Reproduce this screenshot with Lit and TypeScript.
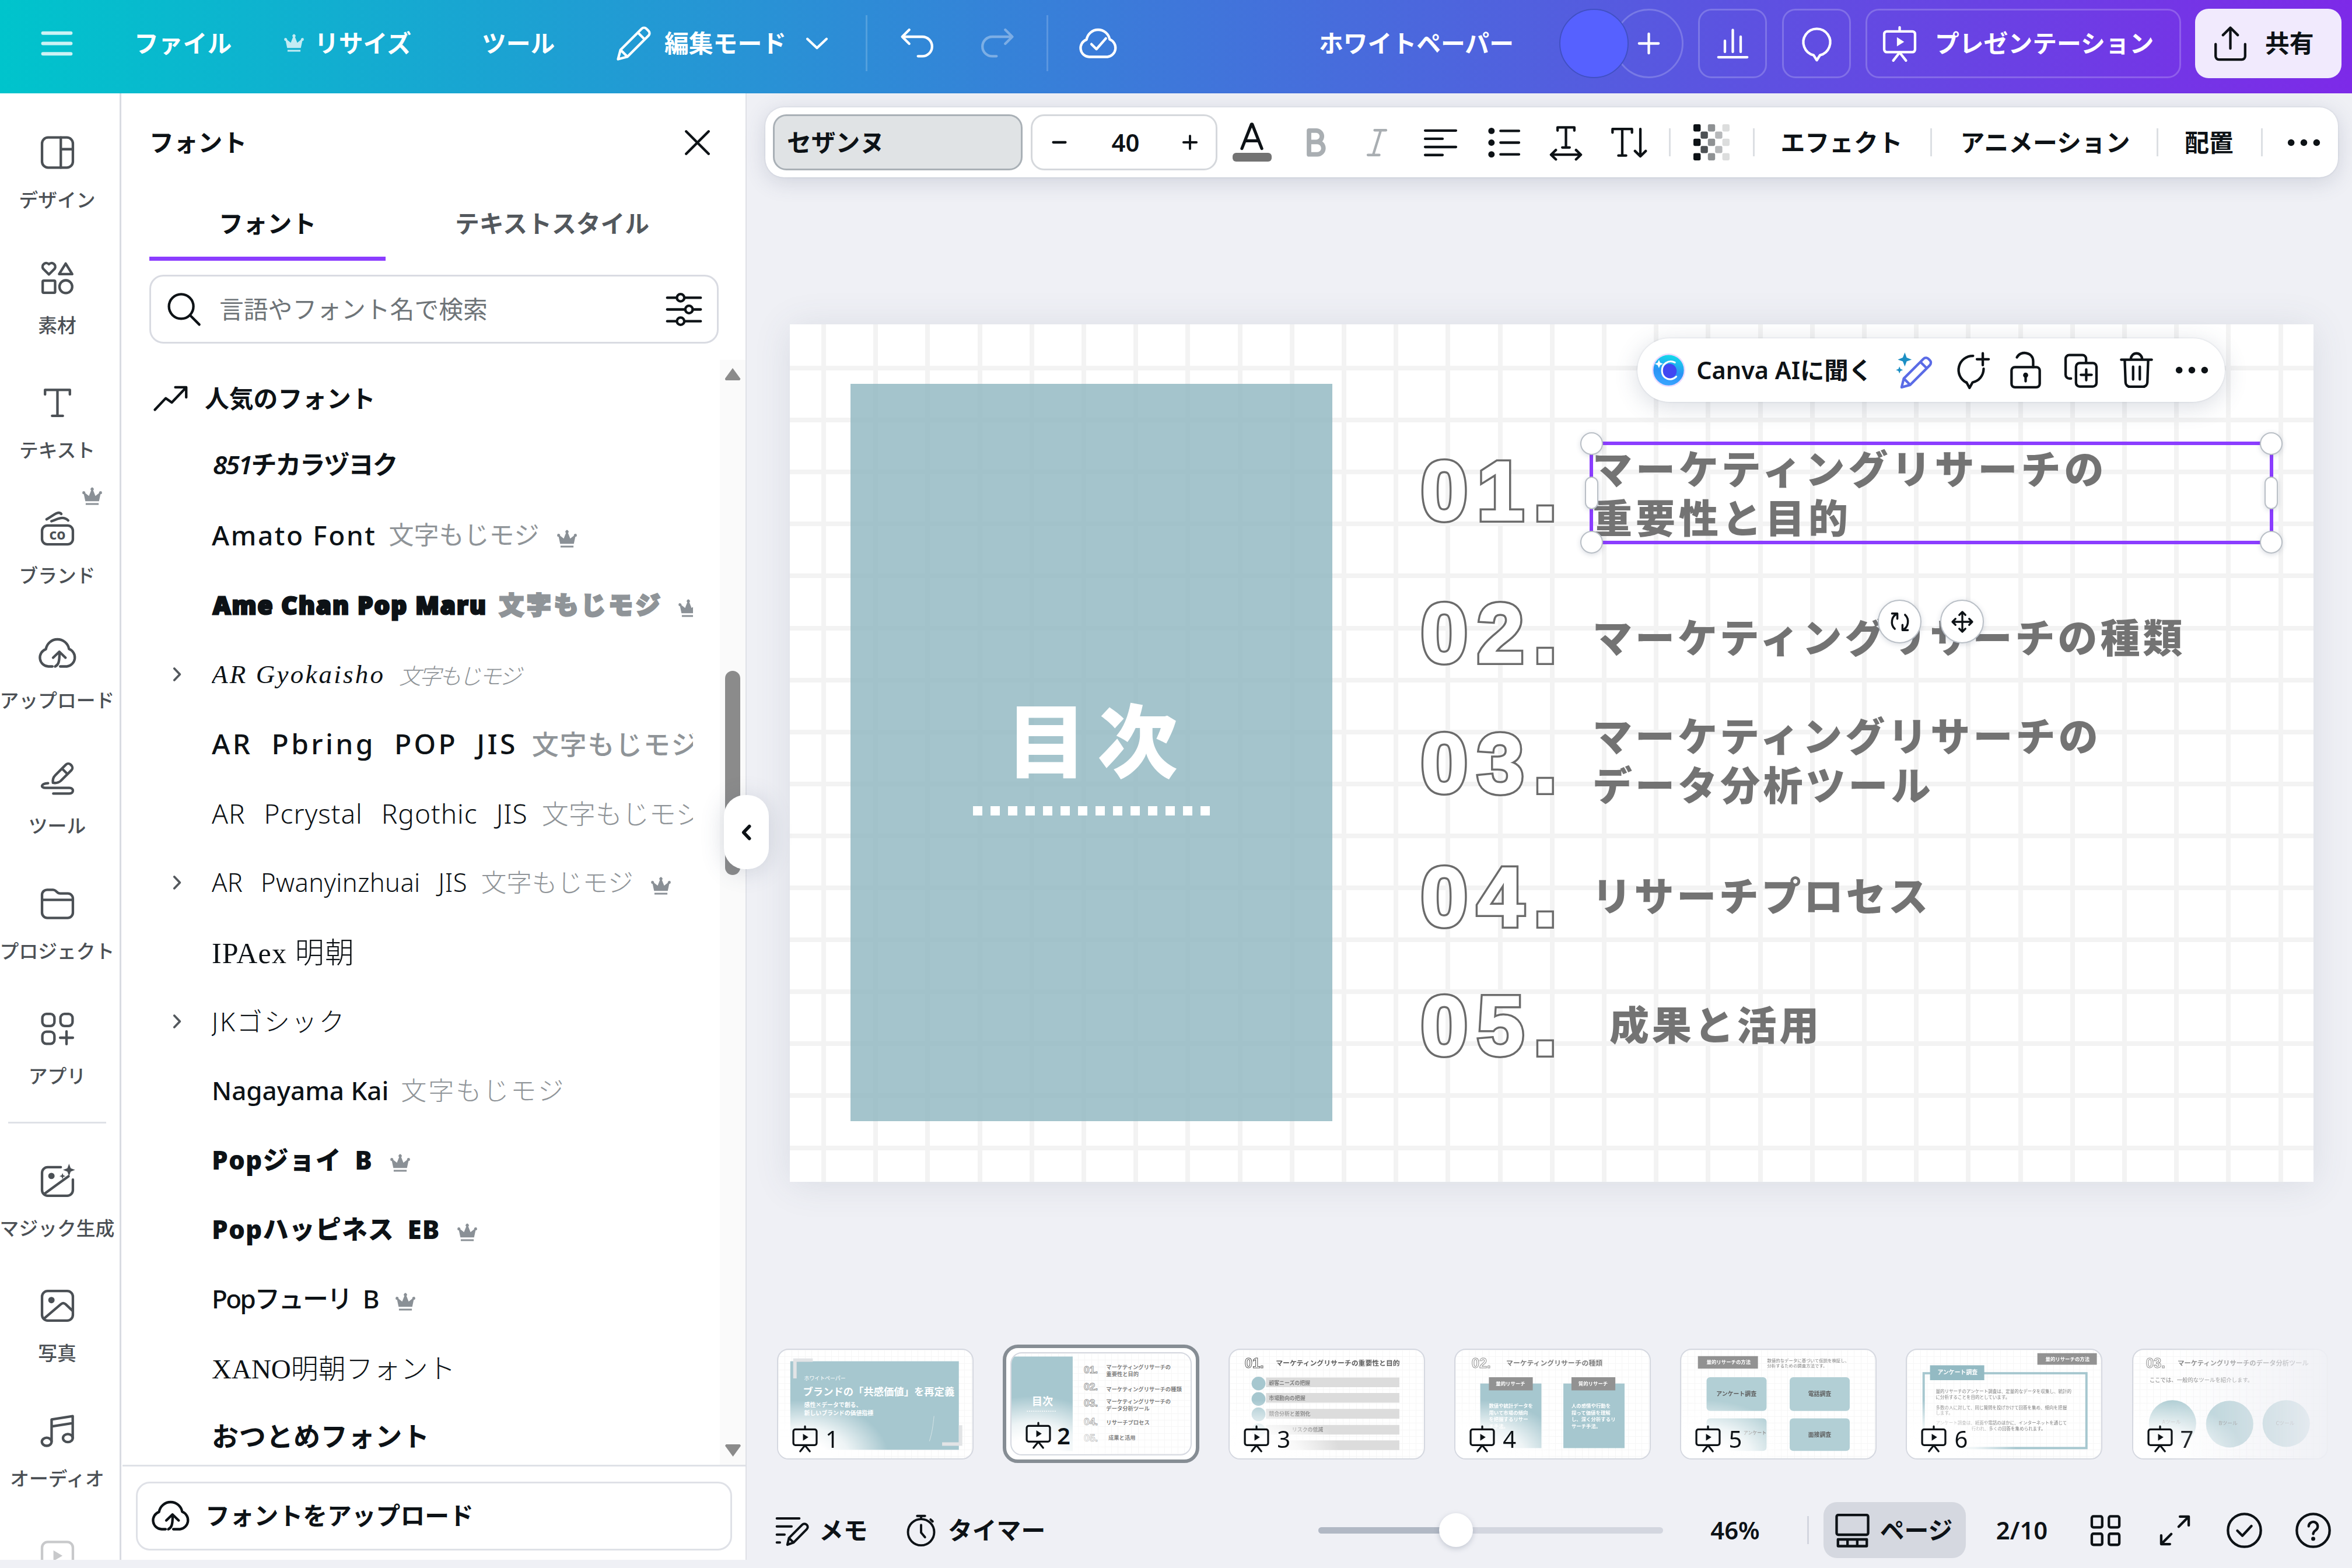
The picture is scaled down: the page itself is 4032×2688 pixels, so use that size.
import { LitElement, css, html, svg } from "lit";
import type { SVGTemplateResult } from "lit";
import { customElement, property } from "lit/decorators.js";
import { classMap } from "lit/directives/class-map.js";
import { styleMap } from "lit/directives/style-map.js";

const cloud = "a5.3 5.3 0 0 1-1.5-10.3A7 7 0 0 1 18.9 9.6 5.4 5.4 0 0 1 17.6 20";

// 24 x 24 grid, stroked with currentColor
const ICONS: Record<string, SVGTemplateResult> = {
  menu: svg`<path stroke-width="2.1" d="M3.7 5.8h16.6M3.7 12h16.600M3.700 18.200h16.600"/>`,
  crown: svg`<path class="fill" d="M4.6 17.2 3 9.6a1.6 1.6 0 1 1 1.5-1.2l4 3.2 2.4-6.2a1.7 1.7 0 1 1 2.2 0l2.4 6.2 4-3.2A1.6 1.6 0 1 1 21 9.6l-1.6 7.6zM5 19.2h14v1.9H5z"/>`,
  pencil: svg`<path d="m2.6 21.4 1.5-5.6L16.7 3.2a2 2 0 0 1 2.8 0l1.3 1.3a2 2 0 0 1 0 2.8L8.2 19.9zM14.4 5.5l4.1 4.1M4.1 15.8l4.1 4.1"/>`,
  down: svg`<path d="m6.3 9.3 5.7 5.4 5.7-5.4"/>`,
  left: svg`<path d="m14 7.5-4.3 4.5 4.3 4.5"/>`,
  right: svg`<path stroke-width="2" d="m9.8 6.8 5 5.2-5 5.2"/>`,
  undo: svg`<path d="M7.2 3.8 3 8l4.2 4.2M3.3 8H15a5.8 5.8 0 0 1 0 11.6h-2.6"/>`,
  redo: svg`<path d="M16.8 3.8 21 8l-4.2 4.2M20.7 8H9a5.8 5.8 0 0 0 0 11.6h2.6"/>`,
  cloudCheck: svg`<path d="M6.6 20${cloud}z"/><path d="m8 12.4 3 3L16.6 9"/>`,
  cloudUp: svg`<path d="M9 20H6.6${cloud}h-4"/><path d="M10.6 20c2-.9 2.6-2.6 2.6-8.2M9.4 14.8l3.7-3.6 3.7 3.6"/>`,
  plus: svg`<path d="M12 6.2v11.6M6.2 12h11.6"/>`,
  minus: svg`<path d="M7.2 12h9.6"/>`,
  chart: svg`<path d="M3.4 20.2h17.2M7.3 17v-6.6M12 17V4M16.7 17V8"/>`,
  comment: svg`<path d="M10.1 19a8 8 0 1 1 3.8 0L12 22z"/>`,
  present: svg`<rect x="2.8" y="4.8" width="18.4" height="12.4" rx="1.6"/><path d="M12 4.8V2.4M12 17.4l-3.8 4.8M12 17.4l3.8 4.8"/><path class="fill" d="m10.4 8.3 4.3 2.7-4.3 2.7z"/>`,
  share: svg`<path d="M12 15V3M7.6 7 12 2.6 16.4 7M3.2 12.4v7.2a2 2 0 0 0 2 2h13.6a2 2 0 0 0 2-2v-7.2"/>`,
  close: svg`<path d="m5.3 5.3 13.4 13.4M18.7 5.3 5.3 18.7"/>`,
  search: svg`<circle cx="10.3" cy="10.2" r="7.3"/><path d="m15.6 15.5 5.5 5.5"/>`,
  sliders: svg`<path d="M2 5h5.7M12.3 5H22M2 12h10.7M17.3 12H22M2 19h5.7M12.3 19H22"/><circle cx="10" cy="5" r="2.2"/><circle cx="15" cy="12" r="2.2"/><circle cx="10" cy="19" r="2.2"/>`,
  trend: svg`<path d="m2.6 18.6 6.5-6.9 3.6 2.6L21 5.6M14.8 5.2h6.5v6"/>`,
  design: svg`<rect x="2.8" y="3" width="18.4" height="18" rx="3.6"/><path d="M14 3v18M14 10h7.2"/>`,
  elements: svg`<path d="M6.9 9.9 3.4 6.4a2.2 2.2 0 0 1 3.5-2.6 2.2 2.2 0 0 1 3.5 2.6zM16.9 3.4l3.9 6.3H13z"/><rect x="3.2" y="13.6" width="7.4" height="7.2" rx=".6"/><circle cx="17" cy="17.2" r="3.8"/>`,
  text: svg`<path d="M4.6 7V4.3h14.8V7M12 4.3v15.5M8.8 19.8h6.4"/>`,
  brand: svg`<rect x="2.8" y="10.4" width="18.4" height="11.2" rx="3.2"/><path d="M5.5 6.7c3-1.6 5.3-3.7 6.8-3.9 1-.1 1.6.2 2 .7M8.4 7.8c3-1 4.6-1.9 6.4-1.9 1.6 0 2.6.5 3.6 1.5"/><text x="12" y="18.7">co</text>`,
  draw: svg`<path d="M9.3 14.6c-.3-2 .3-3.4 1.4-4.500l6.400-6.400a2 2 0 0 1 2.700 0l.600.600a2 2 0 0 1 0 2.700L14 13.400c-1.200 1.100-2.700 1.500-4.700 1.200zM14.700 6.100l3.300 3.300M6.400 14.800c-4.500.200-4.500 2.800-1.500 2.800h14.200c2.800 0 2.800 3.400 0 3.400H9.500"/>`,
  folder: svg`<path d="M2.8 9V6.600a3 3 0 0 1 3-3h3.600c1.900 0 2.200 2.200 4.200 2.200h4.600a3 3 0 0 1 3 3v8.400a3.200 3.200 0 0 1-3.200 3.200H6a3.200 3.200 0 0 1-3.200-3.200zM2.800 9.600h18.400"/>`,
  apps: svg`<rect x="3" y="3.2" width="7.2" height="7.2" rx="2.4"/><rect x="13.8" y="3.2" width="7.2" height="7.2" rx="2.4"/><rect x="3" y="13.8" width="7.2" height="7.2" rx="2.4"/><path d="M17.4 13.6v7.6M13.600 17.400h7.600"/>`,
  magic: svg`<path d="M14 3.800H6.200A3.400 3.400 0 0 0 2.800 7.200v10.200a3.400 3.400 0 0 0 3.400 3.400h11.600a3.400 3.400 0 0 0 3.400-3.400v-6.200M4 19.800 18.600 9.200"/><circle class="fill" cx="8.4" cy="9" r="1.9"/><path class="fill" d="m18.900 1.700 1 2.700 2.600 1-2.600 1-1 2.700-1-2.700-2.600-1 2.600-1zM15 7.300l.500 1.300 1.300.5-1.300.5-.500 1.300-.500-1.300-1.300-.5 1.300-.500z"/>`,
  photo: svg`<rect x="2.8" y="3.2" width="18.4" height="17.6" rx="3.4"/><path d="m4 19.600 10-8.500c1-.900 1.900-.900 2.900 0l4.200 4"/><circle class="fill" cx="8.4" cy="8.6" r="1.9"/>`,
  music: svg`<ellipse cx="5.6" cy="18.3" rx="2.9" ry="2.4"/><ellipse cx="18.2" cy="16.1" rx="2.9" ry="2.4"/><path d="M8.500 18V5l12.600-2v13M8.500 9.200l12.600-2"/>`,
  video: svg`<rect x="2.8" y="3.6" width="18.4" height="17" rx="3.4"/><path class="fill" d="m9.600 8.600 5.400 3.200-5.400 3.200z"/>`,
  color: svg`<path d="m5.800 18.400 6-15.200h.4l6 15.200M7.800 13.600h8.400"/>`,
  bold: svg`<path stroke-width="2.7" d="M8 4.800h4.300a3.400 3.400 0 0 1 0 6.800H8zM8 11.600h4.900a3.700 3.700 0 0 1 0 7.400H8z"/>`,
  italic: svg`<path d="M10.600 4.600h6.800M6.600 19.400h6.800M14.300 4.600 9.700 19.400"/>`,
  align: svg`<path d="M2.800 4.800h18.400M2.800 9.700h10.400M2.800 14.600h18.400M2.800 19.400h10.400"/>`,
  list: svg`<path d="M10.200 5h11M10.200 12h11M10.200 19h11"/><circle class="fill" cx="4.8" cy="5" r="1.9"/><circle class="fill" cx="4.8" cy="12" r="1.9"/><circle class="fill" cx="4.8" cy="19" r="1.9"/>`,
  spacing: svg`<path d="M7 4.800V2.900h10v1.900M12 2.900v12M9.800 14.900h4.400M3.300 19.200h17.400M6 16.400l-2.900 2.800L6 22M18 16.400l2.900 2.800L18 22"/>`,
  vertical: svg`<path d="M2.200 6V3.900h11.600V6M8 3.900v15.800M5.700 19.700h4.600M18.800 3.900v16M15.600 17l3.200 3.200L22 17"/>`,
  spark: svg`<path class="teal" d="m6.400 1.500 1.100 3 3 1.200-3 1.100-1.100 3-1.200-3-3-1.100 3-1.200zM3.200 9.800l.6 1.500 1.500.6-1.500.6-.6 1.500-.6-1.500-1.500-.6 1.500-.6z"/><path class="indigo" d="m4.500 22.200 1.300-5.200L17.500 5.300a2.100 2.100 0 0 1 3 0l.8.8a2.100 2.100 0 0 1 0 3L9.600 20.800zM15.700 7.100l3.800 3.800M5.800 17l3.800 3.800"/>`,
  commentPlus: svg`<path d="M13.700 3.500a8.400 8.400 0 0 0-4.200 15.800h.3L11.600 22.600l1.800-3.300c3.900-.9 6.500-4 6.600-8.100M19.500 2v7M16 5.500h7"/>`,
  unlock: svg`<rect x="3.6" y="10.2" width="16.8" height="12" rx="2"/><path d="M6.800 4.400c2-4.200 9.700-3.400 9.700 2.300v3.500M12 15.400v3.200"/><circle class="fill" cx="12" cy="15" r="1.5"/>`,
  copy: svg`<rect x="9" y="7.8" width="12.2" height="14" rx="2.2"/><path d="M15 7.400V5.200A2.200 2.200 0 0 0 12.800 3H5a2.200 2.200 0 0 0-2.200 2.200v9.600A2.200 2.200 0 0 0 5 17h1M15.100 11.600v6.400M11.900 14.800h6.400"/>`,
  trash: svg`<path d="M2.900 5.800h18.200M5 5.800l.5 13.600a2.600 2.600 0 0 0 2.600 2.500h7.800a2.600 2.600 0 0 0 2.600-2.500L19 5.800M8.600 5.600c.2-4.800 6.600-4.800 6.800 0M10 10v7.600M14 10v7.600"/>`,
  dots: svg`<circle class="fill" cx="4.4" cy="12" r="2"/><circle class="fill" cx="12" cy="12" r="2"/><circle class="fill" cx="19.6" cy="12" r="2"/>`,
  rotate: svg`<path d="M9.500 4.500C4 6.500 2.800 14.500 7.200 18.600M4.600 4.200h5v5M14.500 19.500c5.500-2 6.700-10 2.300-14.100M19.400 19.800h-5v-5"/>`,
  move: svg`<path d="M12 2.500v19M2.500 12h19M9 5.300l3-3 3 3M9 18.700l3 3 3-3M5.300 9l-3 3 3 3M18.700 9l3 3-3 3"/>`,
  notes: svg`<path d="M2.500 4.500h14.500M2.500 9.700h9.500M2.500 14.900h5M2.500 20h2"/><path d="m9.300 21.400 1-4.300 8.600-8.600a1.900 1.900 0 0 1 2.700 0l.2.2a1.900 1.900 0 0 1 0 2.700L13.300 20zM10.300 17.100l3 2.900"/>`,
  timer: svg`<circle cx="12" cy="13.4" r="8.7"/><path d="M12 8.600v5l2.600 3.100M9.400 2.600h5.200M12 2.600v2M18.300 5l1.400 1.300"/>`,
  pages: svg`<rect x="2.6" y="2.8" width="18.8" height="11.8" rx="1"/><path d="M3.400 17.400h17.200v4H3.400zM9.100 17.400v4M14.900 17.400v4"/>`,
  grid: svg`<rect x="3.8" y="3.6" width="6.2" height="6.6" rx="1"/><rect x="14" y="3.6" width="6.2" height="6.6" rx="1"/><rect x="3.8" y="14" width="6.2" height="6.6" rx="1"/><rect x="14" y="14" width="6.2" height="6.6" rx="1"/>`,
  expand: svg`<path d="M14.200 9.800 20 4M15 3.800h5.200V9M9.800 14.200 4 20M9 20.200H3.800V15"/>`,
  check: svg`<circle cx="12" cy="12" r="9.8"/><path d="m7.800 12.200 3 3 5.400-5.800"/>`,
  help: svg`<circle cx="12" cy="12" r="9.8"/><path d="M9.300 9.600a2.700 2.700 0 1 1 4.300 2.200c-1 .7-1.600 1.200-1.600 2.300"/><circle class="fill" cx="12" cy="17" r="1.2"/>`,
};

const icon = (name: string, size = 69) => html`
  <svg class="icon" viewBox="0 0 24 24" width=${size} height=${size}>${ICONS[name]}</svg>
`;

const base = css`
  * {
    box-sizing: border-box;
  }
  :host {
    font-family: "Noto Sans", "Noto Sans CJK JP", sans-serif;
    font-size: 41.8px;
    font-weight: 600;
    line-height: 1;
    color: #0d1216;
    white-space: nowrap;
  }
  .icon {
    display: block;
    flex: none;
    fill: none;
    stroke: currentColor;
    stroke-width: 1.5;
    stroke-linecap: round;
    stroke-linejoin: round;
  }
  .icon .fill {
    fill: currentColor;
    stroke: none;
  }
`;

@customElement("editor-header")
export class EditorHeader extends LitElement {
  render() {
    return html`
      <div class="cell menu">${icon("menu")}</div>
      <div class="cell">ファイル</div>
      <div class="cell resize"><span class="pro">${icon("crown", 38)}</span>リサイズ</div>
      <div class="cell">ツール</div>
      <div class="cell mode">${icon("pencil")}編集モード<span>${icon("down")}</span></div>
      <div class="rule"></div>
      <div class="cell">${icon("undo")}</div>
      <div class="cell faded">${icon("redo")}</div>
      <div class="rule"></div>
      <div class="cell">${icon("cloudCheck")}</div>
      <div class="cell">ホワイトペーパー</div>
      <div class="cell people"><i class="avatar"></i><i class="invite">${icon("plus")}</i></div>
      <div class="cell"><div class="outlined square">${icon("chart")}</div></div>
      <div class="cell"><div class="outlined square">${icon("comment")}</div></div>
      <div class="cell"><div class="outlined wide">${icon("present")}プレゼンテーション</div></div>
      <div class="cell"><div class="share">${icon("share")}共有</div></div>
    `;
  }

  static styles = [base, css`
    :host {
      display: grid;
      grid-template-columns: 230px 258px 338px 226px 432px 54px 137px 119px 54px 413px 412px 238px 144px 143px 565px 269px;
      height: 160px;
      padding-bottom: 12px;
      background: linear-gradient(90deg, #00c4cc, #7d2ae8);
      color: #fff;
    }
    .cell {
      display: flex;
      align-items: center;
      min-width: 0;
    }
    .menu {
      padding-left: 63px;
    }
    .menu .icon {
      opacity: 0.8;
    }
    .pro {
      margin: 0 16px 0 -3px;
      opacity: 0.75;
    }
    .mode {
      gap: 18px;
    }
    .rule {
      align-self: center;
      width: 3px;
      height: 96px;
      background: rgba(255, 255, 255, 0.18);
    }
    .faded {
      opacity: 0.35;
    }
    .avatar,
    .invite {
      flex: none;
      width: 119px;
      height: 119px;
      border-radius: 50%;
    }
    .avatar {
      z-index: 1;
      background: #5661ff;
      border: 2px solid #4150c4;
    }
    .invite {
      display: grid;
      place-items: center;
      margin-left: -25px;
      border: 3px solid rgba(255, 255, 255, 0.2);
    }
    .outlined {
      display: flex;
      align-items: center;
      height: 119px;
      border: 3px solid rgba(255, 255, 255, 0.2);
      border-radius: 23px;
    }
    .square {
      justify-content: center;
      width: 118px;
    }
    .wide {
      gap: 26px;
      width: 541px;
      padding-left: 21px;
    }
    .share {
      display: flex;
      align-items: center;
      gap: 25px;
      width: 251px;
      height: 119px;
      padding-left: 26px;
      border-radius: 23px;
      background: #f1eafd;
      color: #0d1216;
    }
  `];
}

@customElement("side-rail")
export class SideRail extends LitElement {
  render() {
    const item = (name: string, label: string, pro = false) => html`
      <div class="item">
        ${icon(name)}
        ${pro ? html`<span class="pro">${icon("crown", 38)}</span>` : ""}
        <span>${label}</span>
      </div>
    `;
    return html`
      ${item("design", "デザイン")}
      ${item("elements", "素材")}
      ${item("text", "テキスト")}
      ${item("brand", "ブランド", true)}
      ${item("cloudUp", "アップロード")}
      ${item("draw", "ツール")}
      ${item("folder", "プロジェクト")}
      ${item("apps", "アプリ")}
      <hr />
      ${item("magic", "マジック生成")}
      ${item("photo", "写真")}
      ${item("music", "オーディオ")}
      <div class="item last">${icon("video")}</div>
    `;
  }

  static styles = [base, css`
    :host {
      display: flex;
      flex-direction: column;
      height: 2514px;
      padding-top: 67px;
      overflow: hidden;
      background: #fff;
      border-right: 3px solid #d9dbe2;
      font-size: 32.8px;
      font-weight: 500;
      color: #4b5055;
    }
    .item {
      position: relative;
      display: flex;
      flex: none;
      flex-direction: column;
      align-items: center;
      gap: 31px;
      width: 196px;
      height: 214.6px;
    }
    .item > span {
      display: block;
    }
    .item .pro {
      position: absolute;
      top: -39px;
      left: 139px;
      color: #8a9096;
    }
    .item text {
      fill: currentColor;
      stroke: none;
      font: 700 8.5px "Noto Sans", sans-serif;
      text-anchor: middle;
    }
    hr {
      flex: none;
      width: 168px;
      height: 3px;
      margin: -21px 0 64px 14px;
      border: 0;
      background: #dfe1e7;
    }
    .last {
      margin-top: -1px;
      opacity: 0.3;
    }
  `];
}

interface FontRow {
  name: string;
  face: string;
  sample?: string;
  pro?: boolean;
  family?: boolean;
}

const SAMPLE = "文字もじモジ";

const FONTS: FontRow[] = [
  { name: "851チカラヅヨク", face: "chikara" },
  { name: "Amato Font", face: "amato", sample: SAMPLE, pro: true },
  { name: "Ame Chan Pop Maru", face: "ame", sample: SAMPLE, pro: true },
  { name: "AR Gyokaisho", face: "gyokai", sample: SAMPLE, family: true },
  { name: "AR Pbring POP JIS", face: "pbring", sample: SAMPLE },
  { name: "AR Pcrystal Rgothic JIS", face: "pcrystal", sample: SAMPLE },
  { name: "AR Pwanyinzhuai JIS", face: "pwan", sample: SAMPLE, pro: true, family: true },
  { name: "IPAex 明朝", face: "ipaex" },
  { name: "JKゴシック", face: "jk", family: true },
  { name: "Nagayama Kai", face: "nagayama", sample: SAMPLE },
  { name: "Popジョイ B", face: "joy", pro: true },
  { name: "Popハッピネス EB", face: "happiness", pro: true },
  { name: "Popフューリ B", face: "fury", pro: true },
  { name: "XANO明朝フォント", face: "xano" },
  { name: "おつとめフォント", face: "otsutome" },
];

@customElement("font-panel")
export class FontPanel extends LitElement {
  renderRow(font: FontRow) {
    return html`
      <li class=${classMap({ [font.face]: true })}>
        <span class="expander">${font.family ? icon("right", 46) : ""}</span>
        <span class="preview">
          <span class="name">${font.name}</span>
          ${font.sample ? html`<span class="sample">${font.sample}</span>` : ""}
          ${font.pro ? html`<span class="pro">${icon("crown", 38)}</span>` : ""}
        </span>
      </li>
    `;
  }

  render() {
    return html`
      <header>フォント ${icon("close")}</header>
      <nav>
        <span class="tab active">フォント</span>
        <span class="tab">テキストスタイル</span>
      </nav>
      <div class="search">
        ${icon("search")}
        <span>言語やフォント名で検索</span>
        ${icon("sliders")}
      </div>
      <div class="list">
        <ul>
          <li class="heading">${icon("trend")}<span>人気のフォント</span></li>
          ${FONTS.map((font) => this.renderRow(font))}
        </ul>
        <div class="scrollbar">
          <i class="arrow"></i>
          <i class="thumb"></i>
          <i class="arrow end"></i>
        </div>
      </div>
      <footer>
        <div class="upload">${icon("cloudUp")}フォントをアップロード</div>
      </footer>
    `;
  }

  static styles = [base, css`
    :host {
      display: flex;
      flex-direction: column;
      height: 2514px;
      background: #fff;
      border-right: 2px solid #dfe1e7;
    }
    header {
      display: flex;
      align-items: center;
      justify-content: space-between;
      height: 168px;
      padding: 0 48px 0 46px;
    }
    nav {
      display: flex;
      height: 119px;
      margin: 0 46px;
    }
    .tab {
      width: 406px;
      padding-top: 34px;
      text-align: center;
    }
    .tab:last-child {
      width: 572px;
      color: #53585d;
    }
    .active {
      border-bottom: 7px solid #8b3dff;
    }
    .search {
      display: flex;
      align-items: center;
      gap: 26px;
      height: 118px;
      margin: 24px 46px 28px;
      padding: 0 22px 0 22px;
      border: 3px solid #d9dbe2;
      border-radius: 24px;
      font-weight: 400;
      color: #6e7478;
    }
    .search span {
      flex: 1;
    }
    .search .icon {
      color: #0d1216;
    }
    .list {
      display: flex;
      flex: 1;
      min-height: 0;
    }
    ul {
      flex: 1;
      margin: 0;
      padding: 9px 0 0;
      list-style: none;
    }
    li {
      display: flex;
      align-items: center;
      width: 978px;
      height: 118.9px;
    }
    .heading {
      gap: 24px;
      padding-left: 48px;
      height: 114px;
    }
    .expander {
      width: 153px;
      padding-left: 70px;
      color: #53585d;
    }
    .preview {
      display: flex;
      flex: 1;
      align-items: center;
      min-width: 0;
      height: 100%;
      overflow: hidden;
    }
    .preview > span {
      flex: none;
    }
    .sample {
      margin-left: 24px;
      color: #8f9498;
    }
    .pro {
      padding: 12px 0 0 28px;
      color: #8a9096;
    }
    .chikara .name {
      padding: 0 12px 6px 2px;
      font-size: 44px;
      font-weight: 600;
      font-style: oblique 6deg;
      letter-spacing: -2.4px;
    }
    .amato {
      font-size: 46px;
      font-weight: 500;
    }
    .amato .name {
      padding-bottom: 3px;
      letter-spacing: 2.6px;
    }
    .amato .sample {
      margin-left: 21px;
      padding-bottom: 3px;
      font-weight: 400;
      font-size: 43px;
    }
    .ame {
      font-size: 42px;
      font-weight: 900;
      letter-spacing: 2px;
      -webkit-text-stroke: 3px currentColor;
    }
    .ame .name {
      padding-left: 2px;
    }
    .ame .sample {
      margin-left: 21px;
      letter-spacing: 4.8px;
    }
    .ame .pro {
      padding-left: 24px;
    }
    .gyokai {
      font: italic 400 45px "Liberation Serif", "Noto Sans CJK JP", serif;
      letter-spacing: 3.2px;
    }
    .gyokai .sample {
      font-size: 38px;
      font-weight: 300;
      letter-spacing: -3.6px;
    }
    .pbring {
      font-size: 48px;
      font-weight: 500;
      letter-spacing: 4.4px;
      word-spacing: 15px;
    }
    .pbring .sample {
      font-size: 46px;
      letter-spacing: 1.8px;
    }
    .pcrystal {
      font-size: 46px;
      font-weight: 300;
      word-spacing: 19px;
    }
    .pcrystal .name {
      letter-spacing: 1px;
    }
    .pwan {
      font-size: 43.5px;
      font-weight: 300;
      word-spacing: 19px;
    }
    .pwan .name {
      letter-spacing: 0.4px;
    }
    .ipaex {
      font: 400 50px "Liberation Serif", "Noto Sans CJK JP", serif;
      letter-spacing: 1.2px;
    }
    .ipaex .name,
    .xano .name {
      padding-bottom: 5px;
      font-weight: 300;
    }
    .jk {
      font-size: 44px;
      font-weight: 300;
      letter-spacing: 2.9px;
    }
    .nagayama {
      font-size: 44px;
      font-weight: 500;
    }
    .nagayama .sample {
      margin-left: 21px;
      font-weight: 300;
      letter-spacing: 3px;
    }
    .joy,
    .happiness {
      font-size: 44px;
      font-weight: 900;
      letter-spacing: 1.1px;
      word-spacing: 10px;
    }
    .fury {
      font-size: 44px;
      font-weight: 500;
      letter-spacing: -2.6px;
      word-spacing: 11px;
    }
    .xano {
      font: 400 47px "Liberation Serif", "Noto Sans CJK JP", serif;
    }
    .otsutome {
      font-size: 46px;
      font-weight: 700;
      letter-spacing: 0.7px;
    }
    .otsutome .name {
      padding-bottom: 5px;
    }
    .scrollbar {
      display: flex;
      flex-direction: column;
      align-items: center;
      width: 44px;
      background: #fafafa;
    }
    .arrow {
      width: 27px;
      height: 21px;
      margin-top: 14px;
      background: #8b8b8b;
      clip-path: polygon(50% 0, 100% 88%, 94% 100%, 6% 100%, 0 88%);
    }
    .thumb {
      width: 26px;
      height: 350px;
      margin-top: 498px;
      border-radius: 13px;
      background: #8b8b8b;
    }
    .end {
      margin: auto 0 14px;
      transform: rotate(180deg);
    }
    footer {
      height: 163px;
      padding: 26px 23px 0;
      border-top: 3px solid #dfe1e7;
    }
    .upload {
      display: flex;
      align-items: center;
      gap: 25px;
      height: 118px;
      padding-left: 22px;
      padding-bottom: 2px;
      border: 3px solid #dfe1e7;
      border-radius: 24px;
    }
  `];
}

const CHECKER = ["#0d1216", "#4d5154", "#8e9193", "#b6b8ba", "#dcdddd"];

@customElement("edit-toolbar")
export class EditToolbar extends LitElement {
  render() {
    return html`
      <div class="family">セザンヌ</div>
      <i></i>
      <div class="size">${icon("minus", 52)}<span>40</span>${icon("plus", 46)}</div>
      <div class="color">${icon("color", 66)}<b></b></div>
      <div class="off">${icon("bold")}</div>
      <div class="off">${icon("italic")}</div>
      <div>${icon("align")}</div>
      <div>${icon("list")}</div>
      <div>${icon("spacing")}</div>
      <div>${icon("vertical")}</div>
      <i class="rule"></i>
      <div>
        <svg viewBox="0 0 20 20" width="62" height="62">
          ${[0, 1, 2, 3, 4].map((row) =>
            CHECKER.map((fill, col) =>
              (row + col) % 2 ? "" : svg`<rect x=${col * 4} y=${row * 4} width="4" height="4" rx=".8" fill=${fill} />`
            )
          )}
        </svg>
      </div>
      <i class="rule"></i>
      <div>エフェクト</div>
      <i class="rule"></i>
      <div>アニメーション</div>
      <i class="rule"></i>
      <div>配置</div>
      <i class="rule"></i>
      <div>${icon("dots")}</div>
    `;
  }

  static styles = [base, css`
    :host {
      display: grid;
      grid-template-columns: 428px 14px 320px 118px 100px 110px 108px 108px 107px 108px 32px 112px 32px 270px 36px 356px 28px 150px 30px 114px;
      align-items: center;
      height: 120px;
      padding-left: 13px;
      border-radius: 32px;
      background: #fff;
      box-shadow: 0 8px 36px rgba(64, 79, 109, 0.18), 0 0 3px rgba(64, 79, 109, 0.2);
    }
    div {
      display: flex;
      align-items: center;
      justify-content: center;
    }
    .family {
      justify-content: flex-start;
      height: 96px;
      padding-left: 21px;
      border: 3px solid #a9b0b6;
      border-radius: 23px;
      background: #e0e3e5;
    }
    .size {
      justify-content: space-between;
      height: 96px;
      padding: 0 21px 0 20px;
      border: 3px solid #d5d8dc;
      border-radius: 23px;
    }
    .size .icon {
      stroke-width: 2;
    }
    .color {
      flex-direction: column;
      padding-bottom: 8px;
    }
    .color .icon {
      stroke-width: 1.9;
    }
    .color b {
      width: 67px;
      height: 15px;
      margin-top: -8px;
      border-radius: 6px;
      background: #737373;
    }
    .off {
      color: #a9aeb2;
    }
    .rule {
      justify-self: center;
      width: 3px;
      height: 48px;
      background: #dcdfe3;
    }
  `];
}

interface Entry {
  no: string;
  lines: string[];
  top: number;
  left: number;
  textTop: number;
  spacing: number;
}

const ENTRIES: Entry[] = [
  { no: "01.", lines: ["マーケティングリサーチの", "重要性と目的"], top: 214, left: 1376, textTop: 203, spacing: 6 },
  { no: "02.", lines: ["マーケティングリサーチの種類"], top: 458, left: 1376, textTop: 492, spacing: 5 },
  { no: "03.", lines: ["マーケティングリサーチの", "データ分析ツール"], top: 681, left: 1376, textTop: 661, spacing: 5.1 },
  { no: "04.", lines: ["リサーチプロセス"], top: 910, left: 1375, textTop: 935, spacing: 4.6 },
  { no: "05.", lines: ["成果と活用"], top: 1131, left: 1405, textTop: 1156, spacing: 4.8 },
];

@customElement("slide-canvas")
export class SlideCanvas extends LitElement {
  render() {
    return html`
      <div class="cover">
        <h1>目次</h1>
        <div class="dots">${Array.from({ length: 14 }, () => html`<i></i>`)}</div>
      </div>
      ${ENTRIES.map((entry) => html`
        <div class="no" data-no=${entry.no} style=${styleMap({ top: `${entry.top}px` })}>${entry.no}</div>
        <div
          class="entry"
          style=${styleMap({ top: `${entry.textTop}px`, left: `${entry.left}px`, letterSpacing: `${entry.spacing}px` })}
        >
          ${entry.lines.map((line) => html`<p>${line}</p>`)}
        </div>
      `)}
      <div class="selection">
        <i class="knob nw"></i><i class="knob ne"></i>
        <i class="knob sw"></i><i class="knob se"></i>
        <i class="grip w"></i><i class="grip e"></i>
      </div>
      <div class="bar">
        <svg class="ai" viewBox="0 0 24 24" width="57" height="57">
          <defs>
            <linearGradient id="ai" x1=".6" y1="0" x2=".4" y2="1">
              <stop offset="0" stop-color="#12dfe8" />
              <stop offset=".55" stop-color="#2a93f5" />
              <stop offset="1" stop-color="#3aa6ff" />
            </linearGradient>
          </defs>
          <circle cx="12" cy="12" r="11.5" fill="url(#ai)" stroke="#ead9ff" />
          <circle cx="12.6" cy="12.6" r="5.2" fill="#4147f2" />
          <path d="M16.500 6.500c-4.500-2.300-9.500 1-9.300 6.200.2 5.600 6.400 7.700 10.300 4" fill="none" stroke="#fff" stroke-width="1.3" stroke-linecap="round" />
          <path d="m5 4.500.9 2.100L8 7.500l-2.100.9L5 10.500l-.9-2.100L2 7.500l2.100-.9z" fill="#fff" />
        </svg>
        <span>Canva AIに聞く</span>
        ${["spark", "commentPlus", "unlock", "copy", "trash", "dots"].map((name) => icon(name))}
      </div>
      <div class="round rotate">${icon("rotate", 44)}</div>
      <div class="round move">${icon("move", 42)}</div>
    `;
  }

  static styles = [base, css`
    :host {
      position: relative;
      display: block;
      width: 2612px;
      height: 1470px;
      background:
        repeating-linear-gradient(90deg, #f3f3f3 0 8px, transparent 8px 89.2px) 54px 0 / 2700px 100% no-repeat,
        repeating-linear-gradient(#f3f3f3 0 8px, transparent 8px 89.1px) 0 -18px / 100% 1600px no-repeat,
        #fff;
      box-shadow: 0 4px 60px rgba(64, 79, 109, 0.12);
      font-family: "Noto Sans CJK JP", sans-serif;
    }
    .cover {
      position: absolute;
      top: 102px;
      left: 104px;
      display: flex;
      flex-direction: column;
      align-items: center;
      width: 826px;
      height: 1264px;
      padding-top: 535px;
      background: rgba(146, 185, 194, 0.84);
      color: #fff;
    }
    h1 {
      margin: 0 0 0 20px;
      font-size: 138px;
      font-weight: 900;
      letter-spacing: 18px;
    }
    .dots {
      display: flex;
      gap: 14px;
      margin-top: 51px;
    }
    .dots i {
      width: 16px;
      height: 16px;
      background: #fff;
    }
    .no {
      position: absolute;
      left: 1082px;
      font: 700 143px/1 "Liberation Sans", Arial, sans-serif;
      letter-spacing: 17px;
      color: #6b6b6b;
      -webkit-text-stroke: 10px #6b6b6b;
    }
    /* white face laid over the wider grey outline */
    .no::after {
      content: attr(data-no);
      position: absolute;
      inset: 0;
      color: #fff;
      -webkit-text-stroke: 3px #fff;
    }
    .entry {
      position: absolute;
      font-size: 68px;
      font-weight: 900;
      color: #737373;
    }
    p {
      margin: 0;
      line-height: 84px;
    }
    .selection {
      position: absolute;
      top: 201px;
      left: 1371px;
      width: 1172px;
      height: 176px;
      border: 6px solid #8b3dff;
    }
    .knob,
    .grip {
      position: absolute;
      background: #fff;
      border: 2px solid #b9bfc6;
      box-shadow: 0 2px 8px rgba(64, 79, 109, 0.2);
    }
    .knob {
      width: 39px;
      height: 39px;
      border-radius: 50%;
    }
    .grip {
      top: 54px;
      width: 23px;
      height: 56px;
      border-radius: 12px;
    }
    .nw, .ne { top: -22px; }
    .sw, .se { bottom: -22px; }
    .nw, .sw { left: -22px; }
    .ne, .se { right: -22px; }
    .w { left: -14px; }
    .e { right: -14px; }
    .bar {
      position: absolute;
      top: 24px;
      left: 1453px;
      display: flex;
      align-items: center;
      gap: 26.2px;
      width: 1007px;
      height: 109px;
      padding-left: 25px;
      border-radius: 55px;
      background: #fff;
      box-shadow: 0 8px 40px rgba(64, 79, 109, 0.2), 0 0 3px rgba(64, 79, 109, 0.2);
      font-family: "Noto Sans", "Noto Sans CJK JP", sans-serif;
    }
    .bar span {
      width: 313px;
      font-size: 41.4px;
    }
    .ai {
      flex: none;
      margin-right: -7px;
    }
    .teal {
      fill: #1c8fc4;
      stroke: none;
    }
    .indigo {
      stroke: #5a6be6;
    }
    .round {
      position: absolute;
      top: 472px;
      display: grid;
      place-items: center;
      width: 75px;
      height: 75px;
      border: 2px solid #b9bfc6;
      border-radius: 50%;
      background: #fff;
      box-shadow: 0 2px 10px rgba(64, 79, 109, 0.2);
    }
    .round .icon {
      stroke-width: 1.9;
    }
    .rotate {
      left: 1865px;
    }
    .move {
      left: 1972px;
    }
  `];
}

// Miniatures share a 336 x 190 drawing area
const PAGES: SVGTemplateResult[] = [
  svg`
    <rect class="teal" x="21" y="20" width="292" height="155"/>
    <path class="corner" d="M29 50V18h31M316 132v33h-32"/>
    <path class="thin" d="M270 116c-2 18-3 28-8 44"/>
    <g class="white">
      <text x="45" y="53" font-size="9">ホワイトペーパー</text>
      <text class="bold" x="43" y="80" font-size="17.5">ブランドの「共感価値」を再定義</text>
      <text class="bold" x="45" y="100" font-size="10">感性×データで創る、</text>
      <text class="bold" x="45" y="114" font-size="10">新しいブランドの価値指標</text>
    </g>`,
  svg`
    <rect class="teal" x="0" y="6" width="115" height="178"/>
    <text class="white bold" x="38" y="98" font-size="20">目次</text>
    <path class="dash" d="M29 109h54"/>
    <g class="no" font-size="19">
      <text x="136" y="37">01.</text><text x="136" y="69">02.</text><text x="136" y="100">03.</text>
      <text x="136" y="135">04.</text><text x="136" y="166">05.</text>
    </g>
    <g class="bold" font-size="10.2">
      <text x="178" y="30">マーケティングリサーチの</text><text x="178" y="43">重要性と目的</text>
      <text x="178" y="71">マーケティングリサーチの種類</text>
      <text x="178" y="95">マーケティングリサーチの</text><text x="178" y="108">データ分析ツール</text>
      <text x="178" y="134">リサーチプロセス</text><text x="182" y="163">成果と活用</text>
    </g>`,
  svg`
    <text class="no dark" x="26" y="32" font-size="24">01.</text>
    <text class="bold dark" x="80" y="28" font-size="12">マーケティングリサーチの重要性と目的</text>
    <path class="strip" d="M63 57h231M63 84h231M63 112h231M63 140h231M63 167h231"/>
    <g class="teal"><circle cx="50" cy="59" r="12"/><circle cx="50" cy="86" r="12"/><circle cx="50" cy="113" r="12"/><circle cx="50" cy="141" r="12"/></g>
    <g class="bold" font-size="9">
      <text x="68" y="61">顧客ニーズの把握</text><text x="68" y="88">市場動向の把握</text>
      <text x="68" y="115">競合分析と差別化</text><text x="108" y="143">リスクの低減</text>
    </g>`,
  svg`
    <text class="no" x="28" y="32" font-size="24">02.</text>
    <text class="bold" x="88" y="28" font-size="12">マーケティングリサーチの種類</text>
    <path class="teal" d="M43 59h106v113H43zM187 59h106v113H187z"/>
    <path class="tag" d="M58 48h76v23H58zM201 48h76v23h-76z"/>
    <g class="white bold" font-size="8.5">
      <text x="70" y="62">量的リサーチ</text><text x="213" y="62">質的リサーチ</text>
      <text x="58" y="101">数値や統計データを</text><text x="58" y="113">用いて市場の傾向</text>
      <text x="58" y="125">を把握するリサー</text><text x="58" y="137">チ手法。</text>
      <text x="201" y="101">人の感情や行動を</text><text x="201" y="113">探って価値を理解</text>
      <text x="201" y="125">し、深く分析するリ</text><text x="201" y="137">サーチ手法。</text>
    </g>`,
  svg`
    <path class="tag" d="M29 11h104v22H29z"/>
    <text class="white bold" x="44" y="25" font-size="8.5">量的リサーチの方法</text>
    <g font-size="7.5"><text x="149" y="21">数値的なデータに基づいて仮説を検証し、</text><text x="149" y="31">分析するための調査方法です。</text></g>
    <g class="teal light">
      <rect x="44" y="48" width="104" height="59" rx="6"/><rect x="188" y="48" width="104" height="59" rx="6"/>
      <rect x="44" y="120" width="104" height="57" rx="6"/><rect x="188" y="120" width="104" height="57" rx="6"/>
    </g>
    <g class="bold dark" font-size="10">
      <text x="61" y="81">アンケート調査</text><text x="220" y="81">電話調査</text>
      <text x="108" y="148" font-size="8">アンケート</text><text x="220" y="152">面接調査</text>
    </g>`,
  svg`
    <path class="tag" d="M226 6h103v20H226z"/>
    <text class="white bold" x="240" y="19" font-size="8.5">量的リサーチの方法</text>
    <rect class="frame" x="29" y="41" width="282" height="131"/>
    <path class="deep" d="M40 27h94v26H40z"/>
    <text class="white bold" x="53" y="43" font-size="10">アンケート調査</text>
    <g font-size="7.6">
      <text x="50" y="76">量的リサーチのアンケート調査は、定量的なデータを収集し、統計的</text>
      <text x="50" y="86">に分析することを目的としています。</text>
      <text x="50" y="104">多数の人に対して、同じ質問を投げかけて回答を集め、傾向を把握</text>
      <text x="50" y="113">します。</text>
      <text x="50" y="131">アンケート調査は、紙面や電話のほかに、インターネットを通じて</text>
      <text x="112" y="141">行われ、多くの回答を集められます。</text>
    </g>`,
  svg`
    <text class="no" x="22" y="32" font-size="24">03.</text>
    <text class="bold" x="77" y="28" font-size="11.4">マーケティングリサーチのデータ分析ツール</text>
    <text x="28" y="56" font-size="9.5">ここでは、一般的なツールを紹介します。</text>
    <g class="teal light"><circle cx="68" cy="129" r="41"/><circle cx="167" cy="130" r="41"/><circle cx="265" cy="129" r="41"/></g>
    <g font-size="9"><text x="50" y="130">Aツール</text><text x="148" y="132">Bツール</text><text x="247" y="132">Cツール</text></g>`,
];

@customElement("page-thumb")
export class PageThumb extends LitElement {
  @property({ type: Number }) page = 1;
  @property({ type: Boolean, reflect: true }) active = false;

  render() {
    return html`
      <div class="frame-box">
        <svg class="art" viewBox="0 0 336 190" preserveAspectRatio="none">${PAGES[this.page - 1]}</svg>
        <div class="badge">${icon("present", 52)}<span>${this.page}</span></div>
      </div>
    `;
  }

  static styles = [base, css`
    :host {
      display: block;
      flex: none;
      width: 336.5px;
      height: 190px;
      font-weight: 400;
      font-size: 40px;
    }
    :host([active]) {
      height: 203px;
      padding: 7px;
      border: 6px solid #868d94;
      border-radius: 26px;
      background: #fff;
      font-weight: 600;
    }
    .frame-box {
      position: relative;
      height: 100%;
      overflow: hidden;
      border: 2px solid #d5d8e0;
      border-radius: 20px;
      background:
        repeating-linear-gradient(90deg, #f6f6f6 0 1px, transparent 1px 11.4px),
        repeating-linear-gradient(#f6f6f6 0 1px, transparent 1px 11.4px),
        #fff;
    }
    .art {
      display: block;
      width: 100%;
      height: 100%;
      fill: #808080;
      font-family: "Noto Sans CJK JP", sans-serif;
      font-weight: 400;
    }
    .badge {
      position: absolute;
      inset: 0;
      display: flex;
      align-items: flex-end;
      gap: 9px;
      padding: 0 0 8px 20px;
      background: radial-gradient(ellipse 150px 100px at 12% 100%, #fff 30%, rgba(255, 255, 255, 0.8) 55%, transparent);
    }
    :host([active]) .badge {
      padding: 0 0 7px 20px;
      gap: 6px;
    }
    .badge span {
      padding-bottom: 5px;
    }
    .teal { fill: #a6c7cf; }
    .light { fill: #b2cfd5; }
    .deep { fill: #93bac3; }
    .white { fill: #fff; }
    .dark { fill: #5e5e5e; }
    .bold { font-weight: 700; }
    .tag { fill: #929292; }
    .no {
      fill: #fff;
      stroke: #8f8f8f;
      stroke-width: 1;
      font-family: "Liberation Sans", Arial, sans-serif;
      font-weight: 700;
    }
    .no.dark { stroke: #555; }
    .strip { stroke: #dcdcdc; stroke-width: 17; }
    .frame { fill: none; stroke: #a6c7cf; stroke-width: 4; }
    .corner { fill: none; stroke: #e2e4e6; stroke-width: 6; }
    .thin { fill: none; stroke: #d5e3e6; }
    .dash { stroke: #fff; stroke-width: 1.5; stroke-dasharray: 2 2; }
  `];
}

@customElement("editor-footer")
export class EditorFooter extends LitElement {
  @property({ type: Number }) zoom = 40;

  render() {
    return html`
      <div class="label">${icon("notes", 64)}メモ</div>
      <div class="label">${icon("timer", 62)}タイマー</div>
      <div class="slider">
        <i class="fill-track" style=${styleMap({ width: `${this.zoom}%` })}></i>
        <i class="knob" style=${styleMap({ left: `${this.zoom}%` })}></i>
      </div>
      <div>46%</div>
      <i class="rule"></i>
      <div class="pages">${icon("pages")}ページ</div>
      <div>2/10</div>
      <div>${icon("grid")}</div>
      <div>${icon("expand")}</div>
      <div>${icon("check")}</div>
      <div>${icon("help")}</div>
    `;
  }

  static styles = [base, css`
    :host {
      display: grid;
      grid-template-columns: 223px 715px 591px 247px 28px 244px 192px 94px 144px 94px 142px;
      align-items: center;
      height: 96px;
    }
    div {
      display: flex;
      align-items: center;
      justify-content: center;
    }
    .label {
      justify-content: flex-start;
      gap: 15px;
      padding-left: 3px;
    }
    .slider {
      position: relative;
      justify-content: flex-start;
      height: 11px;
      border-radius: 6px;
      background: #d3d6df;
    }
    .fill-track {
      height: 11px;
      border-radius: 6px;
      background: #b1b8c4;
    }
    .knob {
      position: absolute;
      top: -24px;
      width: 58px;
      height: 58px;
      margin-left: -29px;
      border-radius: 50%;
      background: #fff;
      box-shadow: 0 3px 10px rgba(64, 79, 109, 0.25);
    }
    .rule {
      width: 3px;
      height: 48px;
      background: #d3d6df;
    }
    .pages {
      height: 96px;
      gap: 13px;
      padding-right: 8px;
      border-radius: 23px;
      background: #d5d8e0;
    }
  `];
}

@customElement("app-root")
export class AppRoot extends LitElement {
  render() {
    return html`
      <editor-header></editor-header>
      <div class="body">
        <side-rail></side-rail>
        <font-panel></font-panel>
        <main>
          <edit-toolbar></edit-toolbar>
          <slide-canvas></slide-canvas>
          <div class="strip">
            ${[1, 2, 3, 4, 5, 6, 7].map((n) => html`<page-thumb .page=${n} ?active=${n === 2}></page-thumb>`)}
          </div>
          <editor-footer></editor-footer>
        </main>
      </div>
      <div class="collapse">${icon("left", 56)}</div>
    `;
  }

  static styles = [base, css`
    :host {
      position: relative;
      display: block;
      width: 4032px;
      height: 2688px;
      overflow: hidden;
      background: #eff0f5;
    }
    .body {
      display: grid;
      grid-template-columns: 210px 1070px 1fr;
      height: 2528px;
      background: linear-gradient(90deg, #fff 210px, transparent 0) 0 0 / 100% 2514px no-repeat;
    }
    side-rail {
      width: 208px;
    }
    main {
      display: flex;
      flex-direction: column;
      min-width: 0;
    }
    edit-toolbar {
      width: 2696px;
      margin: 24px 0 0 32px;
    }
    slide-canvas {
      flex: none;
      margin: 252px 0 0 74px;
    }
    .strip {
      display: flex;
      align-items: center;
      gap: 50.6px;
      height: 203px;
      margin: 279px 0 0;
      padding-left: 52px;
      -webkit-mask-image: linear-gradient(90deg, #000 2440px, transparent 2735px);
      mask-image: linear-gradient(90deg, #000 2440px, transparent 2735px);
    }
    editor-footer {
      margin: 67px 0 0 42px;
    }
    .collapse {
      position: absolute;
      top: 1363px;
      left: 1241px;
      display: grid;
      place-items: center;
      width: 77px;
      height: 127px;
      border-radius: 36px;
      background: #fff;
      box-shadow: 0 4px 40px rgba(64, 79, 109, 0.2);
    }
    .collapse .icon {
      stroke-width: 2.4;
    }
  `];
}
